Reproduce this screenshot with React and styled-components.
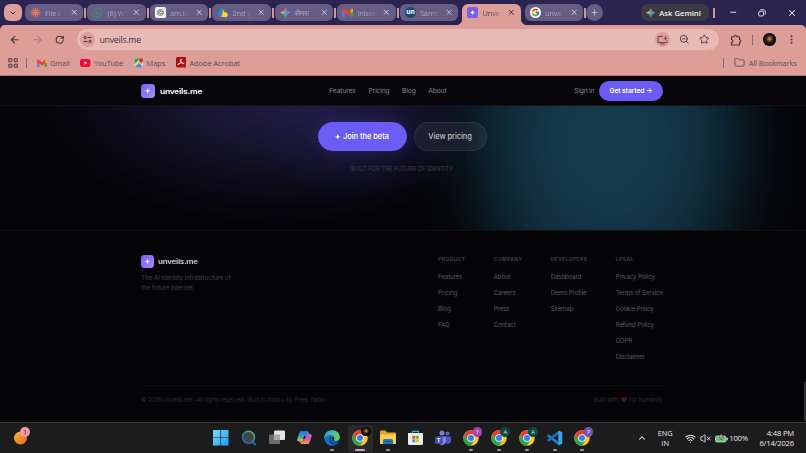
import React from 'react'
import styled, { createGlobalStyle } from 'styled-components'
import { FaWhatsapp } from 'react-icons/fa'
import { FcGoogle } from 'react-icons/fc'
import { RiOpenaiFill } from 'react-icons/ri'
import {
    ArrowLeft, ArrowRight, RotateCw, ChevronDown, ChevronUp, X, Plus, Minus,
    Star, ZoomOut, EllipsisVertical, Folder, Wifi, VolumeX,
} from 'lucide-react'

//////// Style Variables ////////
const frameColor = '#2b2450'
const tabColor = '#655d83'
const toolbarColor = '#dd9e98'
const addressColor = '#e8bab6'
const chromeInk = '#4d3a40'
const accent = '#6c5cf6'
const pageColor = '#040406'
const uiFont = `'Open Sans', 'Noto Sans', sans-serif`
const siteFont = `Inter, 'Liberation Sans', sans-serif`
const row = `
    display: flex;
    align-items: center;
    `
const center = `
    display: flex;
    align-items: center;
    justify-content: center;
    `

//////// Styled Components ////////
const GlobalStyle = createGlobalStyle`
    * { box-sizing: border-box; }
    body { margin: 0; background: ${pageColor}; overflow: hidden; }
    svg { display: block; flex: none; }
`
const Screen = styled.div`
    width: 806px;
    height: 453px;
    display: flex;
    flex-direction: column;
    overflow: hidden;
    font-family: ${uiFont};
    font-size: 6px;
    white-space: nowrap;
    background: ${pageColor};
`
const Label = styled.span`
    font-size: ${p => p.$size}px;
    font-weight: ${p => p.$weight || 400};
    letter-spacing: ${p => p.$track || 0}px;
    color: ${p => p.$color || 'inherit'};
`

// browser frame
const TabStrip = styled.div`
    ${row};
    height: 25px;
    padding-left: 4px;
    background: ${frameColor};
    flex: none;
`
const TabSearch = styled.div`
    ${center};
    width: 17.5px;
    height: 17.5px;
    border-radius: 6px;
    background: ${toolbarColor};
    color: #2f2230;
    margin-right: 3.5px;
`
const Tab = styled.div`
    ${row};
    position: relative;
    width: 58.2px;
    height: ${p => p.$active ? 21.5 : 17.5}px;
    margin-top: ${p => p.$active ? 4 : 0}px;
    padding: 0 5px 0 5px;
    ${p => p.$active && 'padding-bottom: 4px;'}
    border-radius: ${p => p.$active ? '6px 6px 0 0' : '6px'};
    background: ${p => p.$active ? toolbarColor : tabColor};
    color: ${p => p.$active ? '#5c4650' : '#aaa3c6'};
    &::before, &::after {
        content: '';
        display: ${p => p.$active ? 'block' : 'none'};
        position: absolute;
        bottom: 0;
        width: 5px;
        height: 5px;
    }
    &::before {
        left: -5px;
        background: radial-gradient(circle at 0 0, transparent 4.6px, ${toolbarColor} 5px);
    }
    &::after {
        right: -5px;
        background: radial-gradient(circle at 100% 0, transparent 4.6px, ${toolbarColor} 5px);
    }
`
const TabTitle = styled.div`
    width: 22px;
    height: 12px;
    margin: 0 2.7px 0 4px;
    font-size: 7.5px;
    line-height: 12px;
    letter-spacing: -0.15px;
    mask-image: linear-gradient(90deg, #000 50%, transparent 90%);
`
const TabClose = styled.div`
    color: ${p => p.$active ? '#46303c' : '#c9c3dd'};
`
const TabGap = styled.div`
    ${center};
    width: 4.3px;
    &::before {
        content: '';
        width: 1.8px;
        height: 10px;
        background: ${p => p.$blank ? 'transparent' : '#cf959c'};
    }
`
const NewTab = styled.div`
    ${center};
    width: 17px;
    height: 17px;
    margin-left: -1px;
    border-radius: 50%;
    background: ${tabColor};
    color: #c9c3dd;
`
const AskGemini = styled.div`
    ${row};
    gap: 4px;
    width: 68px;
    height: 17.5px;
    padding-left: 5px;
    margin-left: 37.3px;
    border-radius: 7px;
    background: #3c3b41;
    color: #f0eef2;
`
const WindowButtons = styled.div`
    ${row};
    flex: 1;
    justify-content: space-between;
    padding: 0 9px 0 14.5px;
    color: #e6e2f0;
`
const FrameRule = styled.div`
    width: 1.8px;
    height: 10px;
    margin-left: 4.5px;
    background: #cf959c;
`
const ToolbarBack = styled.div`
    background: ${frameColor};
    flex: none;
`
const Toolbar = styled.div`
    ${row};
    height: 28px;
    padding: 1px 9px 0 9px;
    border-radius: 5px 5px 0 0;
    background: ${toolbarColor};
    color: ${chromeInk};
`
const NavIcons = styled.div`
    ${row};
    gap: 11.5px;
    width: 68px;
`
const AddressBar = styled.div`
    ${row};
    width: 642px;
    height: 21.5px;
    padding: 0 10.5px 0 3px;
    border-radius: 11px;
    background: ${addressColor};
`
const AddressChip = styled.div`
    ${center};
    width: 15px;
    height: 15px;
    border-radius: 50%;
    background: ${toolbarColor};
`
const AddressText = styled.div`
    flex: 1;
    padding-left: 4.5px;
    font-size: 8.8px;
    letter-spacing: -0.28px;
    color: #46363b;
`
const AddressActions = styled.div`
    ${row};
    gap: 9px;
    margin-right: -0.5px;
`
const ToolbarEnd = styled.div`
    ${row};
    flex: 1;
    justify-content: space-between;
    padding-left: 10.5px;
`
const InkRule = styled.div`
    width: 1.3px;
    height: 10px;
    background: #8d6375;
`
const Avatar = styled.div`
    width: ${p => p.$size}px;
    height: ${p => p.$size}px;
    border-radius: 50%;
    background: radial-gradient(circle at 50% 45%, #d89b55 0, #8a5a2c 16%, #2a1a10 38%, #070605 62%);
`
const BookmarkBar = styled.div`
    ${row};
    height: 23px;
    padding: 0 9px 3px 8px;
    background: ${toolbarColor};
    border-bottom: 1px solid #a97b7a;
    color: #5e4b52;
    flex: none;
`
const Bookmark = styled.div`
    ${row};
    flex: none;
    gap: ${p => p.$gap || 3.5}px;
    width: ${p => p.$width}px;
`

// site
const Site = styled.div`
    height: 346px;
    flex: none;
    position: relative;
    font-family: ${siteFont};
    background: ${pageColor};
`
const SiteNav = styled.div`
    display: grid;
    grid-template-columns: 188px 39.3px 33.4px 26.2px 146.2px 24.4px 64.2px;
    align-items: center;
    height: 30px;
    padding: 1px 0 0 141.3px;
    background: #07070b;
    border-bottom: 1px solid #111117;
    color: #85858b;
`
const Brand = styled.div`
    ${row};
    gap: ${p => p.$small ? 4.2 : 4.6}px;
`
const BrandMark = styled.div`
    ${center};
    width: ${p => p.$size}px;
    height: ${p => p.$size}px;
    border-radius: 3.4px;
    background: linear-gradient(135deg, #7462ef, #a78bfa);
    color: #fff;
`
const BrandName = styled.div`
    font-size: ${p => p.$size}px;
    font-weight: 700;
    letter-spacing: -0.24px;
    transform: scaleX(1.17);
    transform-origin: left;
    color: ${p => p.$color};
`
const StartButton = styled.div`
    ${center};
    height: 20px;
    border-radius: 10px;
    background: ${accent};
    color: #fff;
`
const Hero = styled.div`
    display: flex;
    flex-direction: column;
    align-items: center;
    height: 124px;
    padding: 16px 2px 0 0;
    background:
        radial-gradient(ellipse 100px 62px at 362px 34px, rgba(82, 66, 205, 0.17), rgba(82, 66, 205, 0.06) 60%, transparent),
        radial-gradient(ellipse 196px 250px at 609px 34px,
            rgba(23, 64, 84, 0.92) 0,
            rgba(22, 63, 83, 0.88) 28%,
            rgba(21, 62, 82, 0.75) 45%,
            rgba(20, 60, 80, 0.54) 60%,
            rgba(18, 55, 74, 0.28) 74%,
            rgba(15, 45, 62, 0.11) 87%,
            transparent 100%),
        radial-gradient(ellipse 250px 134px at 280px -14px,
            #221c46 0,
            #1d183b 22%,
            #16132d 42%,
            #0f0d1d 62%,
            #090812 80%,
            transparent 100%),
        ${pageColor};
`
const HeroActions = styled.div`
    ${row};
    gap: 7px;
`
const HeroButton = styled.div`
    ${center};
    gap: 2.5px;
    width: ${p => p.$primary ? 89 : 73}px;
    height: 29px;
    border-radius: 15px;
    background: ${p => p.$primary ? accent : 'rgba(255, 255, 255, 0.055)'};
    border: 1px solid ${p => p.$primary ? accent : 'rgba(255, 255, 255, 0.07)'};
    color: ${p => p.$primary ? '#fff' : '#c0c0c5'};
    ${p => p.$primary && 'box-shadow: 0 0 15px rgba(108, 92, 246, 0.16);'}
`
const HeroNote = styled.div`
    margin-top: 13px;
    line-height: 9px;
    color: #3c4046;
`
const Footer = styled.div`
    height: 191px;
    border-top: 1px solid #0f0f12;
    padding: 24px 143px 0 141.3px;
    color: #4b4b50;
`
const FooterMain = styled.div`
    display: grid;
    grid-template-columns: 296.8px 55.6px 57px 65px 47.3px;
    height: 131px;
    border-bottom: 1px solid #0d0d10;
`
const FooterIntro = styled.div`
    margin-top: 5.4px;
    line-height: 10.6px;
    color: #414145;
`
const FooterColumn = styled.div`
    display: flex;
    flex-direction: column;
`
const FooterHeading = styled.div`
    height: 13.7px;
    line-height: 8.5px;
    color: #47474c;
`
const FooterLink = styled.div`
    height: 16.05px;
    line-height: 16.05px;
    color: #5b5b61;
`
const FooterBottom = styled.div`
    ${row};
    justify-content: space-between;
    height: 27px;
    color: #303034;
`
const MadeWith = styled.div`
    ${row};
    gap: 2.8px;
`
// sits over the page's right edge
const ScrollThumb = styled.div`
    position: absolute;
    right: 0;
    bottom: 1px;
    width: 2px;
    height: 39px;
    background: #303034;
`

// taskbar
const Taskbar = styled.div`
    display: grid;
    grid-template-columns: 207.2px 390px 1fr;
    height: 31px;
    flex: none;
    border-top: 1px solid #38383a;
    background: #1c1c1d;
    color: #e9e9ea;
`
const Weather = styled.div`
    ${row};
    padding: 0 0 3px 12.5px;
`
const Pins = styled.div`
    display: grid;
    grid-template-columns: repeat(14, 27.8px);
`
const Pin = styled.div`
    ${center};
    position: relative;
    width: 25px;
    height: 27px;
    margin: 1.5px 1.4px;
    padding-bottom: 0.5px;
    border-radius: 3px;
    background: ${p => p.$state === 'active' ? '#2a282b' : 'transparent'};
    &::after {
        content: '';
        position: absolute;
        bottom: 0.5px;
        width: ${p => p.$state === 'active' ? 10 : p.$state ? 4 : 0}px;
        height: 1.8px;
        border-radius: 1px;
        background: ${p => p.$state === 'active' ? '#d29bd8' : '#98989a'};
    }
`
const ProfileBadge = styled.div`
    ${center};
    position: absolute;
    top: 2.8px;
    right: 1.5px;
    width: 9.6px;
    height: 9.6px;
    border-radius: 50%;
    background: ${p => p.$color};
    font-size: 5.6px;
    color: #e8dcf0;
`
const ProfilePhoto = styled(Avatar)`
    position: absolute;
    top: 2px;
    right: 1.5px;
`
const Tray = styled.div`
    ${row};
    padding: 0 12px 0 39.5px;
`
const TrayLang = styled.div`
    width: 37px;
    text-align: center;
    font-size: 7.4px;
    line-height: 10px;
`
const TrayStatus = styled.div`
    ${row};
    gap: 4px;
    margin-left: 1px;
    font-size: 7.7px;
    letter-spacing: -0.2px;
`
const BatteryStatus = styled.div`
    ${row};
    gap: 1.5px;
`
const Clock = styled.div`
    flex: 1;
    text-align: right;
    font-size: 7.6px;
    line-height: 10px;
    letter-spacing: -0.15px;
`

//////// Icons ////////
const ClaudeIcon = () => (
    <svg width="11" height="11" viewBox="-12 -12 24 24" stroke="#d9775c" strokeWidth="2.3" strokeLinecap="round">
        {[0, 30, 60, 90, 120, 150, 180, 210, 240, 270, 300, 330].map(a => (
            <line key={a} x1="0" y1="0" x2="0" y2="-10" transform={`rotate(${a})`} />
        ))}
    </svg>
)
const ChatGptIcon = () => (
    <svg width="11" height="11" viewBox="0 0 24 24">
        <rect width="24" height="24" rx="4" fill="#f3f3f3" />
        <g transform="translate(3 3)"><RiOpenaiFill size={18} color="#333" /></g>
    </svg>
)
const DriveIcon = () => (
    <svg width="11" height="11" viewBox="0 0 24 24">
        <path d="M8 3h7L5 21 1 15z" fill="#2e7fe8" />
        <path d="M8 3h6l3 5-5 5z" fill="#1ea362" />
        <path d="M13 6l9 12-3 4H9z" fill="#fbc313" />
        <path d="M1 15l5-5 4 6-5 6z" fill="#2e7fe8" />
        <circle cx="18" cy="17" r="5.500" fill="#ffd04b" />
    </svg>
)
const GeminiIcon = ({ size }) => (
    <svg width={size} height={size} viewBox="0 0 24 24">
        <defs>
            <clipPath id="spark"><path d="M12 0C13.500 6 18 10.500 24 12 18 13.500 13.500 18 12 24 10.500 18 6 13.500 0 12 6 10.500 10.500 6 12 0z" /></clipPath>
        </defs>
        <g clipPath="url(#spark)">
            <rect width="24" height="24" fill="#4c8df6" />
            <path d="M4 0h16l-8 12z" fill="#e66066" />
            <path d="M0 4v16l12-8z" fill="#e7b93f" />
            <path d="M0 14l12-2v12H4z" fill="#50b56c" />
        </g>
    </svg>
)
const GmailIcon = ({ size }) => (
    <svg width={size} height={size * 0.8} viewBox="0 2 24 19">
        <path d="M0 5v16h5.500V9z" fill="#4285f4" />
        <path d="M24 5v16h-5.500V9z" fill="#34a853" />
        <path d="M18.500 5.500L21 3c2-1 3 1 3 3v3l-5.500 4z" fill="#fbbc04" />
        <path d="M0 6c0-3 2-4 4-2.500l8 6 8-6 1-.5-2.500 10L12 17.500 5.500 13 0 9z" fill="#ea4335" />
    </svg>
)
const UnIcon = () => (
    <svg width="11" height="11" viewBox="0 0 22 22">
        <circle cx="11" cy="11" r="11" fill="#174a7c" />
        <text x="11" y="14.500" textAnchor="middle" fontSize="13" fontWeight="700" fontFamily="Open Sans, sans-serif" fill="#fff">un</text>
    </svg>
)
const GoogleIcon = () => (
    <svg width="11" height="11" viewBox="0 0 22 22">
        <circle cx="11" cy="11" r="11" fill="#fff" />
        <g transform="translate(2 2)"><FcGoogle size={18} /></g>
    </svg>
)
const SparkIcon = ({ size }) => (
    <svg width={size} height={size} viewBox="0 0 24 24" fill="currentColor">
        <path d="M12 0l3.600 8.400L24 12l-8.400 3.600L12 24l-3.600-8.400L0 12l8.400-3.600z" />
    </svg>
)
const SiteIcon = () => (
    <svg width="11" height="11" viewBox="0 0 22 22">
        <rect width="22" height="22" rx="4.500" fill="#7462ec" />
        <path d="M11 6l1.700 3.300L16 11l-3.300 1.700L11 16l-1.700-3.300L6 11l3.300-1.700z" fill="#fff" />
    </svg>
)
const TuneIcon = () => (
    <svg width="9" height="9" viewBox="0 0 18 18" fill="none" stroke={chromeInk} strokeWidth="2">
        <circle cx="4" cy="5" r="2.200" />
        <path d="M9 5h8M1 13h8" />
        <circle cx="14" cy="13" r="2.200" />
    </svg>
)
const InstallIcon = () => (
    <svg width="11" height="10" viewBox="0 0 22 20" fill="none" stroke="#6f4b50" strokeWidth="2">
        <path d="M12 3H2v12h18v-4M6 18h10M17 2v7M13.500 6l3.500 3.500L20.500 6" />
    </svg>
)
const PuzzleIcon = () => (
    <svg width="12" height="12" viewBox="0 0 24 24" fill="none" stroke="currentColor" strokeWidth="2.400" strokeLinejoin="round">
        <path d="M3 5.500h5.500a2.700 2.700 0 0 1 5.400 0H19V11a2.700 2.700 0 0 1 0 5.400V22H3v-5.500a2.700 2.700 0 0 0 0-5.500z" />
    </svg>
)
const AppsIcon = () => (
    <svg width="10" height="10" viewBox="0 0 20 20" fill="none" stroke={chromeInk} strokeWidth="2">
        <path d="M1.500 1.500h6v6h-6zM12.500 1.500h6v6h-6zM1.500 12.500h6v6h-6zM12.500 12.500h6v6h-6z" />
    </svg>
)
const YouTubeIcon = () => (
    <svg width="10.500" height="8" viewBox="0 0 21 16">
        <rect width="21" height="16" rx="4" fill="#f5083a" />
        <path d="M8.500 4.500v7l6-3.500z" fill="#fff" />
    </svg>
)
const MapsIcon = () => (
    <svg width="9.500" height="9.500" viewBox="0 0 20 20">
        <rect width="19" height="19" x="0.500" y="0.500" rx="2" fill="#d9e1dd" />
        <path d="M1 1h12L1 13z" fill="#31a457" />
        <path d="M1 19l9-9 9 9z" fill="#4c86e8" />
        <path d="M1 15L14 2l2 2L3 18z" fill="#f5ce57" />
        <path d="M15 0a4.500 4.500 0 0 1 4.500 4.500C19.500 8 16 9 15 13c-1-4-4.500-5-4.500-8.500A4.500 4.500 0 0 1 15 0z" fill="#df4338" />
        <circle cx="15" cy="4.500" r="1.500" fill="#7c1d17" />
    </svg>
)
const AcrobatIcon = () => (
    <svg width="10.500" height="10.500" viewBox="0 0 21 21">
        <rect width="21" height="21" rx="3" fill="#b1110d" />
        <path d="M10 4c2 0 0 6-5 11-2 2-2-1 3-2.500 5-1.500 9-.5 8 .8-1 1-6-2.300-7-6.800C8.700 5 9 4 10 4z" fill="none" stroke="#fff" strokeWidth="1.500" />
    </svg>
)
const RestoreIcon = () => (
    <svg width="8" height="8" viewBox="0 0 16 16" fill="none" stroke="currentColor" strokeWidth="2">
        <rect x="1.500" y="4.500" width="9.500" height="9.500" rx="2.500" />
        <path d="M5 1.500h5.500a4 4 0 0 1 4 4V11" />
    </svg>
)
const WeatherIcon = () => (
    <svg width="18" height="19" viewBox="0 0 36 38">
        <defs>
            <linearGradient id="sun" x1="0" y1="0" x2="1" y2="1">
                <stop offset="0" stopColor="#f7b53c" />
                <stop offset="1" stopColor="#e8690f" />
            </linearGradient>
        </defs>
        <circle cx="15" cy="22" r="13" fill="url(#sun)" />
        <circle cx="24" cy="10" r="10" fill="#f19aa5" />
        <text x="24" y="15" textAnchor="middle" fontSize="14" fontFamily="Open Sans, sans-serif" fill="#42242b">1</text>
    </svg>
)
const WindowsIcon = () => (
    <svg width="15.500" height="15.500" viewBox="0 0 31 31">
        <defs>
            <linearGradient id="win" x1="0" y1="0" x2="1" y2="1">
                <stop offset="0" stopColor="#7ddcfb" />
                <stop offset="1" stopColor="#1c9df0" />
            </linearGradient>
        </defs>
        <path d="M0 1a1 1 0 0 1 1-1h13.800v14.800H0zM16.200 0H30a1 1 0 0 1 1 1v13.800H16.200zM0 16.200h14.800V31H1a1 1 0 0 1-1-1zM16.200 16.200H31V30a1 1 0 0 1-1 1H16.200z" fill="url(#win)" />
    </svg>
)
const SearchIcon = () => (
    <svg width="16" height="16" viewBox="0 0 32 32" fill="none">
        <defs>
            <linearGradient id="lens" x1="0" y1="1" x2="1" y2="0">
                <stop offset="0.300" stopColor="#2673c4" />
                <stop offset="1" stopColor="#55c66f" />
            </linearGradient>
        </defs>
        <path d="M22 23l6 6" stroke="#1d6dc6" strokeWidth="4" strokeLinecap="round" />
        <circle cx="15" cy="14.500" r="12" fill="#3c464b" stroke="url(#lens)" strokeWidth="2.800" />
    </svg>
)
const TaskViewIcon = () => (
    <svg width="16" height="15" viewBox="0 0 32 30">
        <rect x="0" y="9" width="22" height="19" rx="2" fill="#6b6b6d" />
        <rect x="10" y="1" width="22" height="19" rx="2" fill="#e3e3e4" />
        <path d="M10 9h12v11H12a2 2 0 0 1-2-2z" fill="#a8a8aa" />
    </svg>
)
const CopilotIcon = () => (
    <svg width="15" height="15" viewBox="0 0 30 30">
        <defs>
            <linearGradient id="cpa" x1="0" y1="0" x2="0" y2="1">
                <stop offset="0" stopColor="#2a6fe0" />
                <stop offset="0.500" stopColor="#2fa5b5" />
                <stop offset="1" stopColor="#e6c33a" />
            </linearGradient>
            <linearGradient id="cpb" x1="0" y1="0" x2="0" y2="1">
                <stop offset="0" stopColor="#9a62e8" />
                <stop offset="0.500" stopColor="#e0559b" />
                <stop offset="1" stopColor="#f0a045" />
            </linearGradient>
        </defs>
        <path d="M9 2h11c2 0 3 1 3.500 3l1 3h-5c-2 0-3 1-3.500 3l-3 9c-.6 2-1.500 3-3.500 3H4c-3 0-4-2-3.300-5L5 5c.7-2 2-3 4-3z" fill="url(#cpa)" />
        <path d="M21 28H10c-2 0-3-1-3.500-3l-.5-2h4c2 0 3-1 3.500-3l3-9c.6-2 1.500-3 3.500-3h6c3 0 4 2 3.300 5L25 25c-.7 2-2 3-4 3z" fill="url(#cpb)" />
        <path d="M14 12h3.500L15.500 18H12z" fill="#1c1c1d" />
    </svg>
)
const EdgeIcon = () => (
    <svg width="16" height="16" viewBox="0 0 32 32">
        <defs>
            <linearGradient id="edge" x1="0" y1="0" x2="1" y2="0.300">
                <stop offset="0" stopColor="#269fdf" />
                <stop offset="1" stopColor="#5ed36f" />
            </linearGradient>
        </defs>
        <circle cx="16" cy="16" r="15.500" fill="#1571c5" />
        <path d="M.6 17C0 7 7 .5 16 .5 25 .5 31.500 7 31.500 14c0 5-4 8-8 8-3 0-5-1-4-3 3-4 0-9-6-9C7 10 2 13 .6 17z" fill="url(#edge)" />
        <path d="M13 13c-5 3-4 13 4 16 5 2 10 0 12-5-8 4-15-1-14-7 0-2 0-3-2-4z" fill="#0f4c96" />
        <path d="M16 16c0 6 6 9 14 6l1-2c-4 3-12 3-11-1 1-2 1-4-1-5z" fill="#1c1c1d" />
    </svg>
)
const ChromeIcon = () => (
    <svg width="16" height="16" viewBox="-16 -16 32 32">
        <circle r="15.500" fill="#f9c623" />
        <path d="M-13.400-7.700A15.500 15.500 0 0 1 13.400-7.700H0L-7 4z" fill="#e5402f" />
        <path d="M-13.400-7.700A15.500 15.500 0 0 0 0 15.500L6.500 4 0 7.500-6.500 4z" fill="#2fa44f" />
        <circle r="7.700" fill="#f4f4f4" />
        <circle r="6" fill="#3b7ded" />
    </svg>
)
const ExplorerIcon = () => (
    <svg width="16" height="15" viewBox="0 0 32 30">
        <path d="M0 3a2 2 0 0 1 2-2h9l3 4h16a2 2 0 0 1 2 2v20H0z" fill="#e7a520" />
        <path d="M0 9h32v17a2 2 0 0 1-2 2H2a2 2 0 0 1-2-2z" fill="#fbcf4b" />
        <path d="M6 28v-7a3 3 0 0 1 3-3h14a3 3 0 0 1 3 3v7z" fill="#1b7bc5" />
        <path d="M10 22h12v2H10z" fill="#0f4f8c" />
    </svg>
)
const StoreIcon = () => (
    <svg width="15" height="15.500" viewBox="0 0 30 31">
        <path d="M9 7V2.500h12V7" fill="none" stroke="#4aa3d8" strokeWidth="2.500" />
        <path d="M0 6h30v21a3 3 0 0 1-3 3H3a3 3 0 0 1-3-3z" fill="#ececee" />
        <path d="M8.500 11.500h6v6h-6z" fill="#e8542f" />
        <path d="M15.500 11.500h6v6h-6z" fill="#78b52b" />
        <path d="M8.500 18.500h6v6h-6z" fill="#2d9ce2" />
        <path d="M15.500 18.500h6v6h-6z" fill="#f5b820" />
    </svg>
)
const TeamsIcon = () => (
    <svg width="16" height="16" viewBox="0 0 32 32">
        <circle cx="14" cy="6" r="5" fill="#777be6" />
        <circle cx="25" cy="7" r="4" fill="#5d62d4" />
        <path d="M20 13h10a2 2 0 0 1 2 2v7a6 6 0 0 1-11 3z" fill="#5055c4" />
        <path d="M7 13h15v10a8 8 0 0 1-15 3z" fill="#7b82ee" />
        <rect x="0" y="13" width="15" height="15" rx="2" fill="#4348b4" />
        <path d="M4 17h7M7.500 17v8" stroke="#fff" strokeWidth="2" />
    </svg>
)
const CodeIcon = () => (
    <svg width="16" height="16" viewBox="0 0 32 32">
        <path d="M3 11.500L23 27" stroke="#1b87d2" strokeWidth="4.600" strokeLinecap="round" />
        <path d="M3 20.500L23 5" stroke="#1674bd" strokeWidth="4.600" strokeLinecap="round" />
        <path d="M22.500 1l8 3.500v23l-8 3.500z" fill="#35a5ee" />
    </svg>
)
const BatteryIcon = () => (
    <svg width="13" height="9" viewBox="0 0 26 18">
        <rect x="1" y="4" width="21" height="12" rx="3" fill="#6fbf73" stroke="#d6e8d7" strokeWidth="1.500" />
        <rect x="23" y="7.500" width="2.500" height="5" rx="1" fill="#d6e8d7" />
        <path d="M12 0l-3 7h4l-1 5 5-7h-4l1-5z" fill="#fff" stroke="#1c1c1d" />
    </svg>
)
const HeartIcon = () => (
    <svg width="6" height="5.500" viewBox="0 0 24 22">
        <path d="M12 21L2 11C-2 6 3-1 9 1l3 3 3-3c6-2 11 5 7 10z" fill="#4d1820" />
    </svg>
)

//////// Data ////////
const tabs = [
    { title: 'File c', icon: <ClaudeIcon /> },
    { title: '(6) W', icon: <FaWhatsapp size={11} color="#2f9a68" /> },
    { title: 'am.to', icon: <ChatGptIcon /> },
    { title: '2nd y', icon: <DriveIcon /> },
    { title: 'सैमसं', icon: <GeminiIcon size={11} /> },
    { title: 'Inbox', icon: <GmailIcon size={11} /> },
    { title: 'Sams', icon: <UnIcon /> },
    { title: 'Unve', icon: <SiteIcon />, active: true },
    { title: 'unve', icon: <GoogleIcon /> },
]
const columns = [
    { heading: 'PRODUCT', links: ['Features', 'Pricing', 'Blog', 'FAQ'] },
    { heading: 'COMPANY', links: ['About', 'Careers', 'Press', 'Contact'] },
    { heading: 'DEVELOPERS', links: ['Dashboard', 'Demo Profile', 'Sitemap'] },
    { heading: 'LEGAL', links: ['Privacy Policy', 'Terms of Service', 'Cookie Policy', 'Refund Policy', 'GDPR', 'Disclaimer'] },
]
const pins = [
    { icon: <WindowsIcon /> },
    { icon: <SearchIcon /> },
    { icon: <TaskViewIcon /> },
    { icon: <CopilotIcon /> },
    { icon: <EdgeIcon />, state: 'open' },
    { icon: <ChromeIcon />, state: 'active', photo: true },
    { icon: <ExplorerIcon />, state: 'open' },
    { icon: <StoreIcon /> },
    { icon: <TeamsIcon /> },
    { icon: <ChromeIcon />, state: 'open', badge: 'Y', color: '#a142b5' },
    { icon: <ChromeIcon />, state: 'open', badge: 'A', color: '#0b4a41' },
    { icon: <ChromeIcon />, state: 'open', badge: 'A', color: '#0b4a41' },
    { icon: <CodeIcon />, state: 'open' },
    { icon: <ChromeIcon />, state: 'open', badge: 'P', color: '#7551b8' },
]

function BrowserFrame() {
    return (
        <>
            <TabStrip>
                <TabSearch><ChevronDown size={8} strokeWidth={3} /></TabSearch>
                {tabs.map((tab, i) => (
                    <React.Fragment key={tab.title + i}>
                        <Tab $active={tab.active}>
                            {tab.icon}
                            <TabTitle>{tab.title}</TabTitle>
                            <TabClose $active={tab.active}><X size={8.500} strokeWidth={2.800} /></TabClose>
                        </Tab>
                        <TabGap $blank={i === 6 || i === 7} />
                    </React.Fragment>
                ))}
                <NewTab><Plus size={9} strokeWidth={2.200} /></NewTab>
                <AskGemini>
                    <GeminiIcon size={9.500} />
                    <Label $size={7.700} $weight={600}>Ask Gemini</Label>
                </AskGemini>
                <FrameRule />
                <WindowButtons>
                    <Minus size={8.500} strokeWidth={3} />
                    <RestoreIcon />
                    <X size={10} strokeWidth={2.500} />
                </WindowButtons>
            </TabStrip>
            <ToolbarBack>
                <Toolbar>
                    <NavIcons>
                        <ArrowLeft size={11.500} strokeWidth={2.400} />
                        <ArrowRight size={11.500} strokeWidth={2.200} color="#a9767a" />
                        <RotateCw size={9.500} strokeWidth={2.800} />
                    </NavIcons>
                    <AddressBar>
                        <AddressChip><TuneIcon /></AddressChip>
                        <AddressText>unveils.me</AddressText>
                        <AddressActions>
                            <AddressChip><InstallIcon /></AddressChip>
                            <ZoomOut size={10.500} strokeWidth={2.200} />
                            <Star size={10.500} strokeWidth={2.200} />
                        </AddressActions>
                    </AddressBar>
                    <ToolbarEnd>
                        <PuzzleIcon />
                        <InkRule />
                        <Avatar $size={12.500} />
                        <EllipsisVertical size={11} strokeWidth={2.600} />
                    </ToolbarEnd>
                </Toolbar>
            </ToolbarBack>
            <BookmarkBar>
                <Bookmark $width={18}><AppsIcon /></Bookmark>
                <Bookmark $width={10.500}><InkRule /></Bookmark>
                <Bookmark $width={43.500}><GmailIcon size={10} /><Label $size={7.400} $track={-0.100}>Gmail</Label></Bookmark>
                <Bookmark $width={53.500}><YouTubeIcon /><Label $size={7.400} $track={-0.150}>YouTube</Label></Bookmark>
                <Bookmark $width={42}><MapsIcon /><Label $size={7.400}>Maps</Label></Bookmark>
                <Bookmark $width={547.500}><AcrobatIcon /><Label $size={7.400} $track={-0.050}>Adobe Acrobat</Label></Bookmark>
                <Bookmark $width={11}><InkRule /></Bookmark>
                <Bookmark $width={63} $gap={4}><Folder size={11} strokeWidth={1.800} /><Label $size={7.300} $track={-0.080}>All Bookmarks</Label></Bookmark>
            </BookmarkBar>
        </>
    )
}

function SitePage() {
    return (
        <Site>
            <SiteNav>
                <Brand>
                    <BrandMark $size={13.700}><SparkIcon size={5.500} /></BrandMark>
                    <BrandName $size={7.200} $color="#f1f1f3">unveils.me</BrandName>
                </Brand>
                <Label $size={6.700} $track={-0.120}>Features</Label>
                <Label $size={6.700} $track={-0.180}>Pricing</Label>
                <Label $size={6.700} $track={-0.100}>Blog</Label>
                <Label $size={6.700} $track={-0.100}>About</Label>
                <Label $size={6.700} $track={-0.220}>Sign in</Label>
                <StartButton><Label $size={6.700} $weight={600} $track={-0.120}>Get started →</Label></StartButton>
            </SiteNav>
            <Hero>
                <HeroActions>
                    <HeroButton $primary>
                        <SparkIcon size={5.500} />
                        <Label $size={7.500} $weight={500} $track={-0.050}>Join the beta</Label>
                    </HeroButton>
                    <HeroButton><Label $size={7.500} $weight={500} $track={-0.100}>View pricing</Label></HeroButton>
                </HeroActions>
                <HeroNote><Label $size={5.700} $track={-0.030}>BUILT FOR THE FUTURE OF IDENTITY</Label></HeroNote>
            </Hero>
            <Footer>
                <FooterMain>
                    <FooterColumn>
                        <Brand $small>
                            <BrandMark $size={12.500}><SparkIcon size={5} /></BrandMark>
                            <BrandName $size={6.800} $color="#c4c4c7">unveils.me</BrandName>
                        </Brand>
                        <FooterIntro>
                            <Label $size={6.200} $track={-0.060}>The AI identity infrastructure of<br />the future internet.</Label>
                        </FooterIntro>
                    </FooterColumn>
                    {columns.map(col => (
                        <FooterColumn key={col.heading}>
                            <FooterHeading><Label $size={4.900} $weight={600} $track={0.480}>{col.heading}</Label></FooterHeading>
                            {col.links.map(link => (
                                <FooterLink key={link}><Label $size={6.100} $track={-0.110}>{link}</Label></FooterLink>
                            ))}
                        </FooterColumn>
                    ))}
                </FooterMain>
                <FooterBottom>
                    <Label $size={5.700} $track={-0.090}>© 2026 Unveils.me · All rights reserved · Built in India <Label $size={3.800}>IN</Label> by Preet Yadav</Label>
                    <MadeWith>
                        <Label $size={5.700} $track={-0.040}>Built with</Label>
                        <HeartIcon />
                        <Label $size={5.700} $track={-0.040}>for humanity</Label>
                    </MadeWith>
                </FooterBottom>
            </Footer>
            <ScrollThumb />
        </Site>
    )
}

function WindowsTaskbar() {
    return (
        <Taskbar>
            <Weather><WeatherIcon /></Weather>
            <Pins>
                {pins.map((pin, i) => (
                    <Pin key={i} $state={pin.state}>
                        {pin.icon}
                        {pin.badge && <ProfileBadge $color={pin.color}>{pin.badge}</ProfileBadge>}
                        {pin.photo && <ProfilePhoto $size={9.600} />}
                    </Pin>
                ))}
            </Pins>
            <Tray>
                <ChevronUp size={10} strokeWidth={2.500} />
                <TrayLang>ENG<br />IN</TrayLang>
                <TrayStatus>
                    <Wifi size={11} strokeWidth={2.200} />
                    <VolumeX size={11} strokeWidth={2} />
                    <BatteryStatus>
                        <BatteryIcon />
                        100%
                    </BatteryStatus>
                </TrayStatus>
                <Clock>4:48 PM<br />6/14/2026</Clock>
            </Tray>
        </Taskbar>
    )
}

export default function App() {
    return (
        <Screen>
            <GlobalStyle />
            <BrowserFrame />
            <SitePage />
            <WindowsTaskbar />
        </Screen>
    )
}
